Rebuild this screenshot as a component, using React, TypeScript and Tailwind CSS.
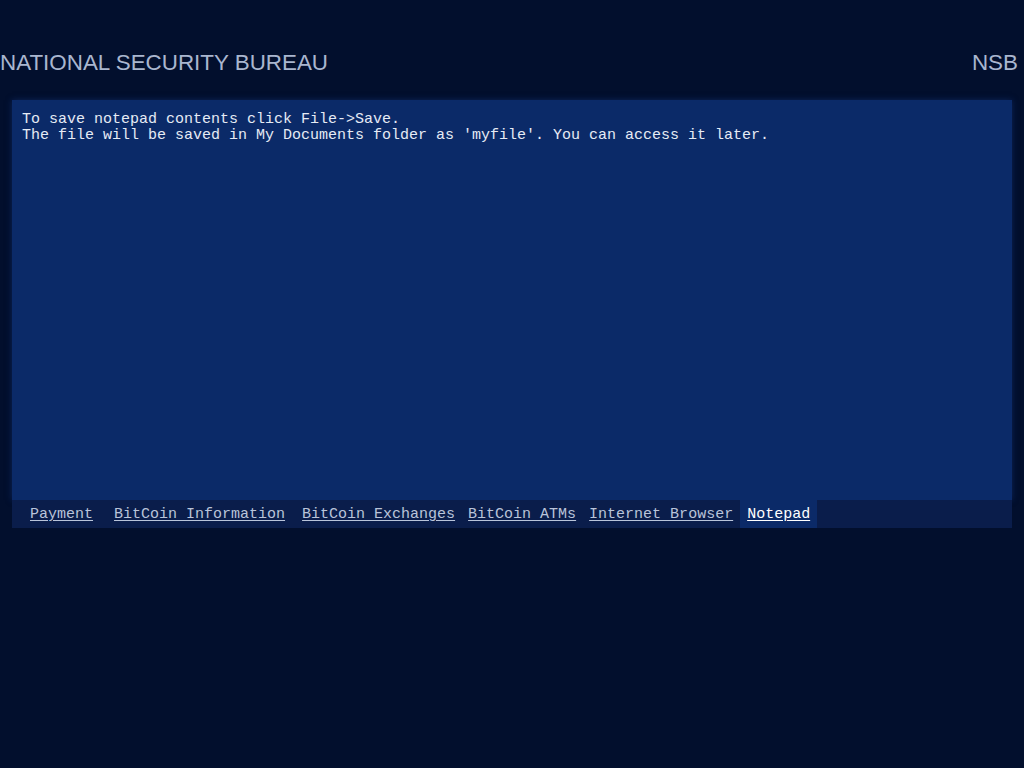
const TABS = [
    { label: "Payment", ml: "ml-[18px]" },
    { label: "BitCoin Information", ml: "ml-[21px]" },
    { label: "BitCoin Exchanges", ml: "ml-[17px]" },
    { label: "BitCoin ATMs", ml: "ml-[13px]" },
    { label: "Internet Browser", ml: "ml-[13px]" },
];

export default function App() {
    return (
        <div className="w-[1024px] h-[768px] bg-[#020f2d] overflow-hidden">
            {/* Header */}
            <div className="flex justify-between items-center h-[100px] pt-[26px] pr-[6px] font-['Liberation_Sans',Arial,sans-serif] text-[22.4px] text-[#a9b6cf]">
                <span>NATIONAL SECURITY BUREAU</span>
                <span>NSB</span>
            </div>

            {/* Notepad panel */}
            <div className="mx-[12px] font-['Liberation_Mono','Courier_New',monospace] text-[15px] leading-[16px]">
                <div className="h-[400px] bg-[#0b2a68] shadow-[0_0_6px_rgba(20,50,120,0.6)] px-[10px] pt-[12px] text-[#e6ebf5] whitespace-pre">
                    <div>To save notepad contents click File-&gt;Save.</div>
                    <div>The file will be saved in My Documents folder as 'myfile'. You can access it later.</div>
                </div>

                {/* Tabs */}
                <div className="flex items-stretch h-[28px] bg-[#0a1d4b]">
                    {TABS.map((t) => (
                        <a
                            key={t.label}
                            href="#"
                            className={`${t.ml} flex items-center pt-[2px] text-[#b9c4da] underline underline-offset-[2px] whitespace-pre`}
                        >
                            {t.label}
                        </a>
                    ))}
                    <a
                        href="#"
                        className="ml-[7px] px-[7px] flex items-center pt-[2px] bg-[#0b2a68] text-white underline underline-offset-[2px] whitespace-pre"
                    >
                        Notepad
                    </a>
                </div>
            </div>
        </div>
    );
}
